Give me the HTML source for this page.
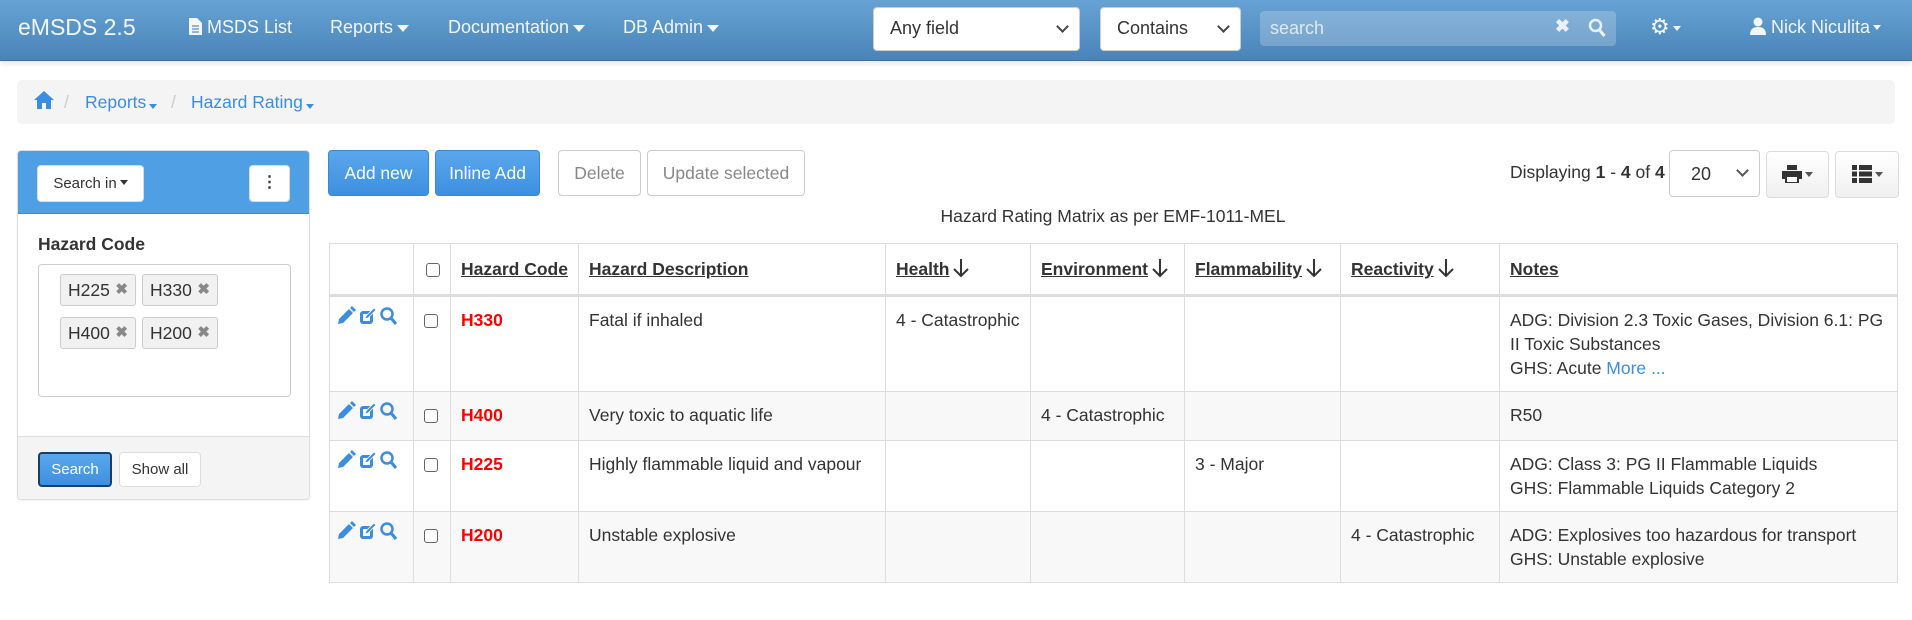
<!DOCTYPE html>
<html><head><meta charset="utf-8"><style>
*{box-sizing:border-box;margin:0;padding:0}
body{width:1912px;height:620px;overflow:hidden;background:#fff;font-family:"Liberation Sans",sans-serif;font-size:17.5px;color:#333;position:relative}
.abs{position:absolute}
.nav{left:0;top:0;width:1912px;height:61px;background:linear-gradient(#66a3d4,#4a83b8);border-bottom:1px solid #3c6f9e;box-shadow:0 2px 6px rgba(0,0,0,.12)}
.nav .t{position:absolute;top:17px;color:#f2f6fa;font-size:18px}
.caret{display:inline-block;width:0;height:0;border-left:6px solid transparent;border-right:6px solid transparent;border-top:7px solid currentColor;vertical-align:middle;margin-left:4px}
.sc{display:inline-block;width:0;height:0;border-left:4px solid transparent;border-right:4px solid transparent;border-top:5px solid currentColor;vertical-align:3px;margin-left:3px}
.sel{background:#fff;border:1px solid #ccc;border-radius:4px;top:7px;height:44px;font-size:18px;padding:10px 0 0 16px;color:#333}
.chev{position:absolute;right:12px;top:14px;width:9px;height:9px;border-right:2px solid #444;border-bottom:2px solid #444;transform:rotate(45deg)}
.bc{left:17px;top:80px;width:1878px;height:44px;background:#f4f4f4;border-radius:5px}
.bc span{position:absolute;top:12px;color:#3a8de0;font-size:17.5px}
.btn{position:absolute;height:46px;border-radius:4px;font-size:17.5px;text-align:center;line-height:44px}
.bp{background:linear-gradient(#5aa7ec,#3d8fe0);color:#fff;border:1px solid #3a87d6}
.bd{background:#fff;color:#888;border:1px solid #ccc}
.bg{background:linear-gradient(#fff,#f0f0f0);border:1px solid #ddd}
table{position:absolute;left:329px;top:243px;border-collapse:collapse;table-layout:fixed;width:1568px}
td,th{border:1px solid #ddd;vertical-align:top;padding:11px 10px;line-height:24px;text-align:left}
th{border-bottom:3px solid #ddd;vertical-align:middle;font-weight:bold;text-decoration:underline;padding:10px}
tr.s td{background:#f8f8f8}
.red{color:#f00;font-weight:bold}
.cb{display:inline-block;width:14px;height:14px;border:1.5px solid #666;border-radius:3px;vertical-align:middle;background:#fff}
.arr{display:inline-block;vertical-align:-3px;margin-left:4px}
.tag{position:absolute;height:32px;border:1px solid #ccc;background:#f1f1f1;border-radius:3px;font-size:17.5px;padding:5px 0 0 7px;width:76px}
.tag b{color:#888;position:absolute;right:7px;top:5px;font-size:15px}
</style></head><body>
<div class="abs nav">
<span class="t" style="left:18px;top:14px;font-size:23px">eMSDS 2.5</span>
<span class="t" style="left:189px"><svg width="13" height="17" viewBox="0 0 13 17" style="vertical-align:-2px"><path d="M0 0h8l5 5v12H0z" fill="#f2f6fa"/><path d="M3 8h7M3 11h7M3 14h7" stroke="#5a90c4" stroke-width="1.3"/></svg> MSDS List</span>
<span class="t" style="left:330px">Reports<span class="caret"></span></span>
<span class="t" style="left:448px">Documentation<span class="caret"></span></span>
<span class="t" style="left:623px">DB Admin<span class="caret"></span></span>
<div class="abs sel" style="left:873px;width:207px">Any field<span class="chev"></span></div>
<div class="abs sel" style="left:1100px;width:141px">Contains<span class="chev"></span></div>
<div class="abs" style="left:1260px;top:11px;width:356px;height:35px;background:rgba(255,255,255,.22);border-radius:4px;color:#dce9f5;font-size:18px;padding:7px 0 0 10px">search
<span style="position:absolute;right:46px;top:5px;color:#e9f0f7;font-weight:bold">✖</span>
<svg class="abs" style="right:10px;top:7px" width="18" height="20" viewBox="0 0 18 20"><circle cx="7.5" cy="7.5" r="5.5" fill="none" stroke="#e9f0f7" stroke-width="2.5"/><path d="M11.5 12l5 6" stroke="#e9f0f7" stroke-width="3"/></svg></div>
<span class="t" style="left:1650px;top:14px;font-size:22px">⚙<span class="sc"></span></span>
<span class="t" style="left:1750px"><svg width="16" height="18" viewBox="0 0 16 18" style="vertical-align:-2px"><circle cx="8" cy="5" r="4.5" fill="#f2f6fa"/><path d="M0 18c0-6 3-8 8-8s8 2 8 8z" fill="#f2f6fa"/></svg> Nick Niculita<span class="sc"></span></span>
</div>
<div class="abs bc">
<svg class="abs" style="left:17px;top:10px" width="20" height="20" viewBox="0 0 20 20"><path d="M10 1L0 10h3v9h5v-6h4v6h5v-9h3z" fill="#3a8de0"/></svg>
<span style="left:47px;color:#ccc">/</span>
<span style="left:68px">Reports<span class="sc"></span></span>
<span style="left:154px;color:#ccc">/</span>
<span style="left:174px">Hazard Rating<span class="sc"></span></span>
</div>
<div class="abs" style="left:17px;top:150px;width:293px;height:350px;border:1px solid #ddd;border-radius:4px;overflow:hidden;box-shadow:0 1px 2px rgba(0,0,0,.05)">
<div class="abs" style="left:0;top:0;width:293px;height:63px;background:#4f9fe4;border-bottom:1px solid #3d8bd0"></div>
<div class="abs btn" style="left:19px;top:14px;width:107px;height:37px;font-size:15px;line-height:35px;background:#fff;border:1px solid #ddd">Search in<span class="sc"></span></div>
<div class="abs btn" style="left:231px;top:14px;width:41px;height:37px;background:#fff;border:1px solid #ddd;font-weight:bold;line-height:33px;font-size:16px">⋮</div>
<div class="abs" style="left:20px;top:83px;font-weight:bold">Hazard Code</div>
<div class="abs" style="left:20px;top:113px;width:253px;height:133px;border:1px solid #ccc;border-radius:4px"></div>
<div class="tag" style="left:42px;top:123px">H225<b>✖</b></div>
<div class="tag" style="left:124px;top:123px">H330<b>✖</b></div>
<div class="tag" style="left:42px;top:166px">H400<b>✖</b></div>
<div class="tag" style="left:124px;top:166px">H200<b>✖</b></div>
<div class="abs" style="left:0;top:285px;width:293px;height:65px;background:#f4f4f4;border-top:1px solid #ddd"></div>
<div class="abs btn bp" style="left:20px;top:301px;width:74px;height:35px;line-height:31px;font-size:15px;border:2px solid #1a3d66">Search</div>
<div class="abs btn" style="left:101px;top:301px;width:82px;height:35px;line-height:33px;font-size:15px;background:#fff;border:1px solid #ddd">Show all</div>
</div>
<div class="btn bp" style="left:328px;top:150px;width:101px">Add new</div>
<div class="btn bp" style="left:435px;top:150px;width:105px">Inline Add</div>
<div class="btn bd" style="left:558px;top:150px;width:83px">Delete</div>
<div class="btn bd" style="left:647px;top:150px;width:158px">Update selected</div>
<div class="abs" style="left:1510px;top:162px">Displaying <b>1</b> - <b>4</b> of <b>4</b></div>
<div class="abs" style="left:1669px;top:150px;width:91px;height:47px;border:1px solid #ccc;border-radius:4px;padding:13px 0 0 21px;font-size:18px">20<span class="chev" style="top:15px;border-color:#555"></span></div>
<div class="btn bg" style="left:1766px;top:151px;width:63px;height:47px"><svg width="20" height="18" viewBox="0 0 20 18" style="vertical-align:-3px"><path d="M5 0h10v5H5zM0 6h20v8h-3v4H3v-4H0z" fill="#333"/><path d="M5 12h10v5H5z" fill="#fff"/></svg><span class="sc" style="color:#555"></span></div>
<div class="btn bg" style="left:1835px;top:151px;width:64px;height:47px"><svg width="20" height="18" viewBox="0 0 20 18" style="vertical-align:-3px"><path d="M0 0h5v5H0zM7 0h13v5H7zM0 6.5h5v5H0zM7 6.5h13v5H7zM0 13h5v5H0zM7 13h13v5H7z" fill="#333"/></svg><span class="sc" style="color:#555"></span></div>
<div class="abs" style="left:329px;top:206px;width:1568px;text-align:center">Hazard Rating Matrix as per EMF-1011-MEL</div>
<table>
<colgroup><col style="width:84px"><col style="width:37px"><col style="width:128px"><col style="width:307px"><col style="width:145px"><col style="width:154px"><col style="width:156px"><col style="width:159px"><col style="width:398px"></colgroup>
<tr style="height:52px"><th></th><th style="text-decoration:none;padding:6px 12px"><span class="cb"></span></th><th>Hazard Code</th><th>Hazard Description</th>
<th>Health<svg class="arr" width="16" height="20" viewBox="0 0 16 20"><path d="M8 1v17M1 11l7 7 7-7" fill="none" stroke="#333" stroke-width="2"/></svg></th>
<th>Environment<svg class="arr" width="16" height="20" viewBox="0 0 16 20"><path d="M8 1v17M1 11l7 7 7-7" fill="none" stroke="#333" stroke-width="2"/></svg></th>
<th>Flammability<svg class="arr" width="16" height="20" viewBox="0 0 16 20"><path d="M8 1v17M1 11l7 7 7-7" fill="none" stroke="#333" stroke-width="2"/></svg></th>
<th>Reactivity<svg class="arr" width="16" height="20" viewBox="0 0 16 20"><path d="M8 1v17M1 11l7 7 7-7" fill="none" stroke="#333" stroke-width="2"/></svg></th><th>Notes</th></tr>
<tr style="height:96px"><td class="ic"></td><td><span class="cb"></span></td><td class="red">H330</td><td>Fatal if inhaled</td><td>4 - Catastrophic</td><td></td><td></td><td></td><td>ADG: Division 2.3 Toxic Gases, Division 6.1: PG II Toxic Substances<br>GHS: Acute <span style="color:#3a8de0">More ...</span></td></tr>
<tr class="s" style="height:49px"><td class="ic"></td><td><span class="cb"></span></td><td class="red">H400</td><td>Very toxic to aquatic life</td><td></td><td>4 - Catastrophic</td><td></td><td></td><td>R50</td></tr>
<tr style="height:71px"><td class="ic"></td><td><span class="cb"></span></td><td class="red">H225</td><td>Highly flammable liquid and vapour</td><td></td><td></td><td>3 - Major</td><td></td><td>ADG: Class 3: PG II Flammable Liquids<br>GHS: Flammable Liquids Category 2</td></tr>
<tr class="s" style="height:71px"><td class="ic"></td><td><span class="cb"></span></td><td class="red">H200</td><td>Unstable explosive</td><td></td><td></td><td></td><td>4 - Catastrophic</td><td>ADG: Explosives too hazardous for transport<br>GHS: Unstable explosive</td></tr>
</table>
<script>
document.querySelectorAll('td.ic').forEach(function(td){td.style.padding='9px 6px';td.innerHTML='<svg width="68" height="20" viewBox="0 0 68 20"><path d="M2 18l1-5L13 3l4 4L7 17z M14 2l2-2 4 4-2 2z" fill="#3a8de0"/><rect x="24" y="5" width="13" height="13" rx="3" fill="#3a8de0"/><rect x="27" y="8" width="7" height="7" fill="#fff"/><path d="M29 13l1-3 8-8 2 2-8 8z" fill="#3a8de0" stroke="#fff" stroke-width="0.8"/><circle cx="51" cy="8" r="5.5" fill="none" stroke="#3a8de0" stroke-width="2.5"/><path d="M55 12l5 6" stroke="#3a8de0" stroke-width="3"/></svg>';});
</script>
</body></html>
